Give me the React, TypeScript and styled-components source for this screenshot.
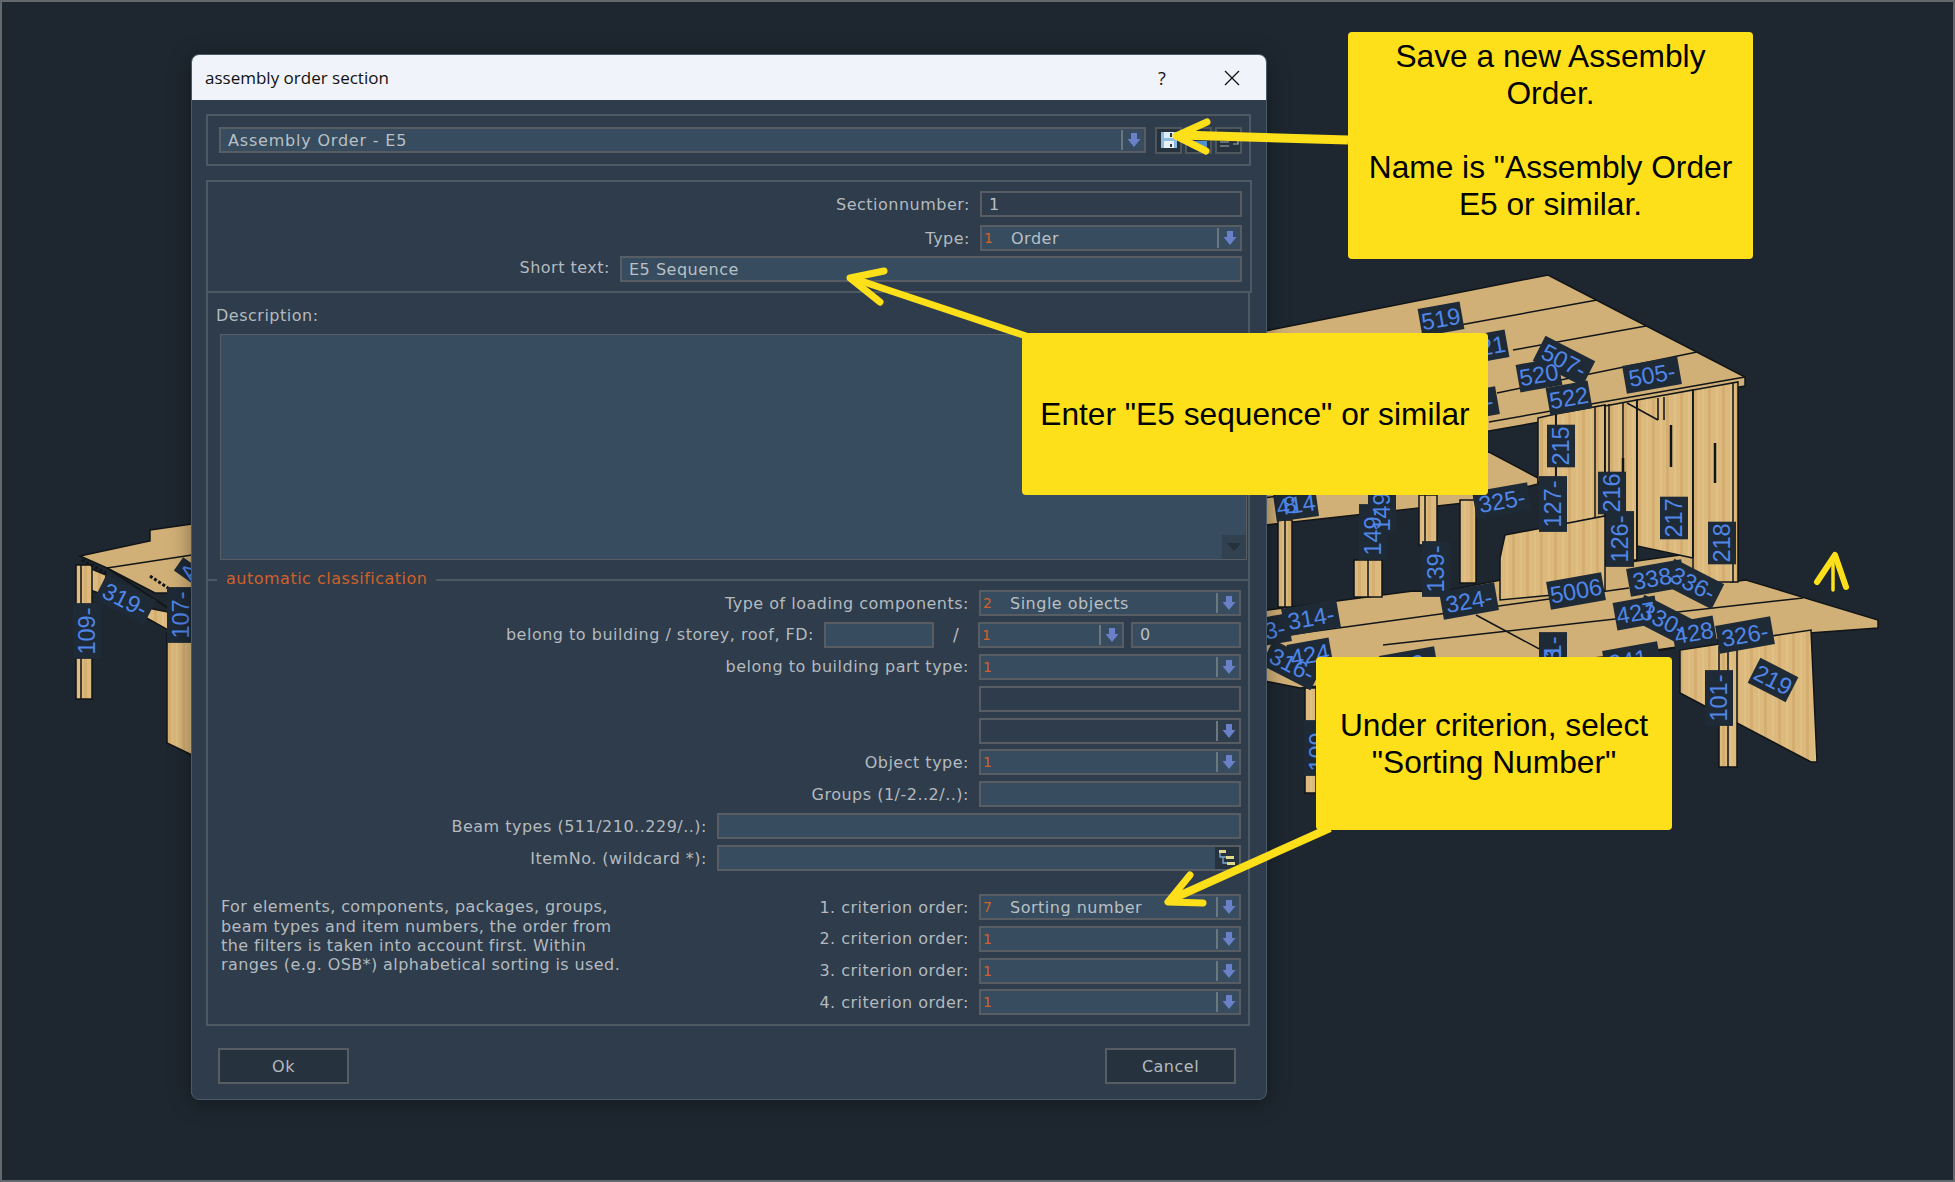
import * as React from 'react'
import styled, { createGlobalStyle } from 'styled-components'

const GlobalStyle = createGlobalStyle`
  html, body {
    margin: 0;
    padding: 0;
    background: #1e2730;
  }
`

const Desktop = styled.div`
  position: relative;
  width: 1955px;
  height: 1182px;
  overflow: hidden;
  background: #1e2730;
  box-shadow: inset 0 0 0 2px #63686c;
  font-family: "DejaVu Sans", sans-serif;
`

const SceneLayer = styled.svg`
  position: absolute;
  left: 0;
  top: 0;
`

const Dialog = styled.div`
  position: absolute;
  left: 191px;
  top: 54px;
  width: 1076px;
  height: 1046px;
  display: flex;
  flex-direction: column;
  box-sizing: border-box;
  border-radius: 8px;
  overflow: hidden;
  background: #2e3c4b;
  border: 1px solid #4b5a68;
  box-shadow: 0 3px 22px rgba(0, 0, 0, 0.4);
  color: #b4babf;
  font-size: 16px;
  letter-spacing: 0.5px;
`

const TitleBar = styled.div`
  height: 45px;
  flex: none;
  display: flex;
  align-items: center;
  background: #f0f3f9;
  color: #111;
  font-family: "Open Sans", sans-serif;
  font-size: 17px;
  letter-spacing: 0;
  padding: 0 26px 0 13px;
`

const TitleText = styled.div`
  flex: 1;
`

const HelpMark = styled.div`
  width: 20px;
  margin-right: 52px;
  text-align: center;
  font-size: 18px;
`

const DialogBody = styled.div`
  flex: 1;
  display: flex;
  flex-direction: column;
  padding: 14px 14px 0 14px;
`

const ProfileBar = styled.div`
  height: 52px;
  box-sizing: border-box;
  border: 2px solid #4e5964;
  display: flex;
  align-items: center;
  gap: 3px;
  padding: 0 9px 0 11px;
  margin-right: 1px;
`

const MainFrame = styled.div`
  margin-top: 14px;
  height: 113px;
  box-sizing: border-box;
  border: 2px solid #4e5964;
  display: grid;
  grid-template-rows: 34px 31px 26px;
  align-items: start;
  padding: 9px 8px 0 0;
`

const Row = styled.div`
  height: 26px;
  display: flex;
  align-items: center;
  justify-content: flex-end;
`

const Label = styled.span`
  white-space: nowrap;
  margin-right: 10px;
`

const RaisedLabel = styled(Label)`
  position: relative;
  top: -2px;
`

const Field = styled.div<{ $width: number; $dark?: boolean }>`
  width: ${p => p.$width}px;
  height: 26px;
  flex: none;
  box-sizing: border-box;
  border: 2px solid #575d63;
  background: ${p => (p.$dark ? '#2e3c4b' : '#374c5e')};
  display: flex;
  align-items: center;
  padding-left: 7px;
  color: #b9c0c5;
`

const ComboCode = styled.span`
  width: 27px;
  margin-left: -5px;
  flex: none;
  color: #cf622a;
  font-size: 14px;
`

const ComboText = styled.span<{ $wide?: boolean }>`
  flex: 1;
  white-space: nowrap;
  letter-spacing: ${p => (p.$wide ? 0.8 : 0.5)}px;
`

const ComboArrow = styled.div`
  width: 23px;
  height: 20px;
  flex: none;
  display: flex;
  align-items: center;
  justify-content: center;
  border-left: 2px solid #6c7780;
  box-sizing: border-box;
`

const ToolButton = styled.div`
  width: 27px;
  height: 27px;
  box-sizing: border-box;
  border: 2px solid #4f565c;
  background: #26323d;
  flex: none;
  display: flex;
  align-items: center;
  justify-content: center;
`

const TreeButton = styled(ToolButton)`
  width: 24px;
  height: 22px;
  border: none;
`

const Spacer = styled.span<{ $w: number }>`
  width: ${p => p.$w}px;
  flex: none;
`

const DescriptionBlock = styled.div`
  height: 286px;
  flex: none;
  box-sizing: border-box;
  border-right: 2px solid #4e5964;
  border-left: 2px solid #4e5964;
  margin-right: 2px;
  display: flex;
  flex-direction: column;
  padding: 13px 0 0 8px;
`

const DescriptionBox = styled.div`
  position: relative;
  margin-top: 9px;
  margin-left: 4px;
  margin-right: 1px;
  height: 226px;
  box-sizing: border-box;
  border: 1px solid #575d63;
  background: #374c5e;
`

const ScrollDown = styled.div`
  position: absolute;
  right: 0;
  bottom: 0;
  width: 24px;
  height: 24px;
  background: #31414f;
  display: flex;
  align-items: center;
  justify-content: center;
`

const ClassificationFrame = styled.div`
  position: relative;
  height: 447px;
  flex: none;
  box-sizing: border-box;
  border: 2px solid #4e5964;
  margin-right: 2px;
  padding: 9px 7px 0 0;
  display: flex;
  flex-direction: column;
`

const Legend = styled.span`
  position: absolute;
  left: 9px;
  top: -12px;
  padding: 0 8px 0 9px;
  background: #2e3c4b;
  color: #cf622a;
`

const ClassRows = styled.div`
  display: grid;
  grid-auto-rows: 26px;
  row-gap: 5.9px;
`

const Slash = styled.span`
  width: 44px;
  text-align: center;
  font-size: 17px;
`

const CriteriaArea = styled.div`
  margin-top: 23px;
  display: flex;
  justify-content: space-between;
`

const HelpNote = styled.div`
  margin-left: 13px;
  margin-top: 3px;
  line-height: 19.4px;
  white-space: pre-line;
  letter-spacing: 0.4px;
`

const CriteriaRows = styled.div`
  display: grid;
  grid-auto-rows: 26px;
  row-gap: 5.7px;
`

const ButtonRow = styled.div`
  display: flex;
  justify-content: space-between;
  padding: 22px 16px 0 12px;
`

const ActionButton = styled.div`
  width: 131px;
  height: 36px;
  box-sizing: border-box;
  border: 2px solid #575d63;
  background: #26323d;
  display: flex;
  align-items: center;
  justify-content: center;
`

const Callout = styled.div<{ $x: number; $y: number; $w: number; $h: number; $center?: boolean }>`
  position: absolute;
  left: ${p => p.$x}px;
  top: ${p => p.$y}px;
  width: ${p => p.$w}px;
  height: ${p => p.$h}px;
  box-sizing: border-box;
  background: #fde01a;
  border-radius: 4px;
  color: #000;
  font-family: "Liberation Sans", Arial, sans-serif;
  font-size: 31.7px;
  text-align: center;
  white-space: pre-line;
  display: flex;
  justify-content: center;
  align-items: ${p => (p.$center ? 'center' : 'flex-start')};
  padding-top: ${p => (p.$center ? 0 : 6)}px;
`

const ArrowLayer = styled.svg`
  position: absolute;
  left: 0;
  top: 0;
  pointer-events: none;
`

const DownArrow = () => (
  <svg width="14" height="16" viewBox="0 0 14 16">
    <path d="M4 1h6v6h3.5L7 15 .5 7H4z" fill="#6a80c8" />
  </svg>
)

const Combo = ({ width, code, text, dark }: { width: number; code?: string; text?: string; dark?: boolean }) => (
  <Field $width={width} $dark={dark}>
    <ComboCode>{code}</ComboCode>
    <ComboText>{text}</ComboText>
    <ComboArrow><DownArrow /></ComboArrow>
  </Field>
)

type Tag = { x: number; y: number; r: number; t: string }

const tags: Tag[] = [
  { x: 1441, y: 319, r: -10, t: '519' },
  { x: 1486, y: 347, r: -10, t: '521' },
  { x: 1470, y: 405, r: -10, t: '510-' },
  { x: 1539, y: 375, r: -10, t: '520' },
  { x: 1564, y: 361, r: 27, t: '507-' },
  { x: 1652, y: 375, r: -10, t: '505-' },
  { x: 1569, y: 398, r: -10, t: '522' },
  { x: 1561, y: 446, r: -90, t: '215' },
  { x: 1612, y: 493, r: -90, t: '216' },
  { x: 1674, y: 518, r: -90, t: '217' },
  { x: 1722, y: 543, r: -90, t: '218' },
  { x: 1553, y: 504, r: -90, t: '127-' },
  { x: 1620, y: 539, r: -90, t: '126-' },
  { x: 1502, y: 501, r: -10, t: '325-' },
  { x: 1296, y: 505, r: -8, t: '414' },
  { x: 1290, y: 505, r: -8, t: '8' },
  { x: 1373, y: 532, r: -90, t: '149-' },
  { x: 1382, y: 512, r: -90, t: '149' },
  { x: 1436, y: 569, r: -90, t: '139-' },
  { x: 1469, y: 601, r: -10, t: '324-' },
  { x: 1576, y: 591, r: -10, t: '5006' },
  { x: 1656, y: 578, r: -10, t: '338-' },
  { x: 1693, y: 584, r: 27, t: '336-' },
  { x: 1311, y: 618, r: -10, t: '314-' },
  { x: 1553, y: 660, r: -90, t: '131-' },
  { x: 1553, y: 668, r: -90, t: '213' },
  { x: 1636, y: 613, r: -10, t: '427' },
  { x: 1663, y: 620, r: 27, t: '330-' },
  { x: 1694, y: 633, r: -10, t: '428' },
  { x: 1745, y: 635, r: -10, t: '326-' },
  { x: 1262, y: 632, r: -10, t: '323-' },
  { x: 1310, y: 655, r: -10, t: '424' },
  { x: 1292, y: 665, r: 27, t: '316-' },
  { x: 1409, y: 665, r: -10, t: '233-' },
  { x: 1632, y: 660, r: -10, t: '341-' },
  { x: 1773, y: 680, r: 27, t: '219' },
  { x: 1719, y: 698, r: -90, t: '101-' },
  { x: 1318, y: 748, r: -90, t: '109-' },
  { x: 87, y: 631, r: -90, t: '109-' },
  { x: 125, y: 600, r: 27, t: '319-' },
  { x: 181, y: 615, r: -90, t: '107-' },
  { x: 190, y: 572, r: -55, t: 'A' },
]

const ink = '#111518'

// wooden parts of the model, all hand placed on the picture
const flatParts: string[] = [
  '80,556 150,541 150,530 192,524 192,593 155,593 107,568',
  '1260,332 1548,275 1745,377 1745,386 1489,431 1260,470',
  '1260,490 1489,452 1538,478 1538,484 1464,503 1266,525 1260,526',
  '1260,611 1413,591 1440,592 1501,580 1680,555 1689,555 1731,582 1746,580 1878,620 1878,628 1715,640 1652,652 1300,688 1260,680',
]

const grainParts: string[] = [
  '82,565 106,575 104,595 82,587',
  '143,607 168,612 168,630 143,616',
  '76,565 92,565 92,607 76,607',
  '76,656 92,656 92,699 76,699',
  '167,633 192,633 192,755 167,743',
  '1538,418 1556,414 1556,482 1538,482',
  '1556,414 1605,405 1605,516 1556,526',
  '1605,406 1637,400 1637,560 1605,560',
  '1637,400 1693,390 1693,558 1637,546',
  '1693,390 1738,382 1738,582 1693,582',
  '1278,520 1292,520 1292,607 1278,607',
  '1354,560 1382,560 1382,597 1354,597',
  '1419,495 1437,495 1437,545 1419,545',
  '1460,500 1476,500 1476,583 1460,583',
  '1505,535 1605,516 1605,590 1500,600 1500,558',
  '1680,650 1811,630 1817,762 1811,762 1680,693',
  '1719,647 1737,647 1737,767 1719,767',
  '1305,688 1316,688 1316,793 1305,793',
]

const seams: number[][] = [
  [1460, 325, 1597, 300],
  [1513, 350, 1646, 326],
  [1497, 393, 1697, 352],
  [1489, 422, 1745, 377],
  [1556, 414, 1556, 526],
  [1595, 407, 1595, 518],
  [1605, 405, 1605, 516],
  [1609, 404, 1609, 560],
  [1623, 402, 1623, 500],
  [1637, 400, 1637, 560],
  [1693, 390, 1693, 558],
  [1733, 382, 1733, 582],
  [1627, 403, 1658, 420],
  [1658, 398, 1658, 420],
  [1664, 397, 1664, 420],
  [1260, 498, 1464, 480],
  [1280, 636, 1629, 588],
  [1383, 645, 1803, 598],
  [1656, 650, 1742, 638],
  [1476, 615, 1545, 652],
  [1728, 650, 1728, 767],
  [1285, 520, 1285, 607],
  [1368, 560, 1368, 597],
  [1425, 495, 1425, 545],
  [81, 565, 81, 607],
  [81, 656, 81, 699],
  [107, 568, 168, 608],
  [107, 568, 192, 555],
]

const cracks: number[][] = [
  [1566, 433, 1566, 446],
  [1623, 458, 1623, 473],
  [1671, 425, 1671, 467],
  [1715, 443, 1715, 483],
]

const Scene = () => (
  <SceneLayer width="1955" height="1182" viewBox="0 0 1955 1182">
    <defs>
      <pattern id="grain" width="14" height="40" patternUnits="userSpaceOnUse">
        <rect width="14" height="40" fill="#dcb97c" />
        <rect width="3" height="40" fill="#d4ae70" />
        <rect x="8" width="2" height="40" fill="#e0c084" />
      </pattern>
    </defs>
    {flatParts.map((p, i) => (
      <polygon key={i} points={p} fill="#d1b077" stroke={ink} strokeWidth="1.5" />
    ))}
    {grainParts.map((p, i) => (
      <polygon key={i} points={p} fill="url(#grain)" stroke={ink} strokeWidth="1.5" />
    ))}
    {seams.map((s, i) => (
      <line key={i} x1={s[0]} y1={s[1]} x2={s[2]} y2={s[3]} stroke={ink} strokeWidth="1.5" />
    ))}
    {cracks.map((s, i) => (
      <line key={i} x1={s[0]} y1={s[1]} x2={s[2]} y2={s[3]} stroke={ink} strokeWidth="2.5" />
    ))}
    <path d="M82 560L106 573M150 576L168 588" stroke={ink} strokeWidth="3" strokeDasharray="3 2" />
    {tags.map((tag, i) => {
      const w = tag.t.length * 13.2 + 3
      return (
        <g key={i} transform={`translate(${tag.x} ${tag.y}) rotate(${tag.r})`}>
          <rect x={-w / 2} y={-14} width={w} height={28} fill="#1e2a36" />
        </g>
      )
    })}
    {tags.map((tag, i) => (
      <text
        key={i}
        transform={`translate(${tag.x} ${tag.y}) rotate(${tag.r})`}
        textAnchor="middle"
        y="8"
        fontFamily="Liberation Sans, sans-serif"
        fontSize="23.5"
        fill="#4f86e8"
      >
        {tag.t}
      </text>
    ))}
    <g fill="none" stroke="#fde01a" strokeWidth="6" strokeLinecap="round" strokeLinejoin="round">
      <path d="M1817 582 L1835 555 L1846 587" />
      <path d="M1833 563 L1833 590" strokeWidth="3.5" />
    </g>
  </SceneLayer>
)

const Arrows = () => (
  <ArrowLayer width="1955" height="1182" viewBox="0 0 1955 1182">
    <g fill="none" stroke="#fde01a" strokeLinecap="round" strokeLinejoin="round">
      <path d="M1348 140 L1180 135" strokeWidth="9" strokeLinecap="butt" />
      <path d="M1207 122 L1176 136 L1206 151" strokeWidth="7" />
      <path d="M1026 336 L855 279" strokeWidth="7" strokeLinecap="butt" />
      <path d="M884 271 L850 278 L880 302" strokeWidth="7" />
      <path d="M1330 828 L1172 899" strokeWidth="8" strokeLinecap="butt" />
      <path d="M1190 875 L1168 902 L1203 903" strokeWidth="7" />
    </g>
  </ArrowLayer>
)

export default function App() {
  return (
    <Desktop>
      <GlobalStyle />
      <Scene />

      <Dialog>
        <TitleBar>
          <TitleText>assembly order section</TitleText>
          <HelpMark>?</HelpMark>
          <svg width="16" height="16" viewBox="0 0 16 16">
            <path d="M1 1l14 14M15 1L1 15" stroke="#111" strokeWidth="1.3" />
          </svg>
        </TitleBar>

        <DialogBody>
          <ProfileBar>
            <Field $width={927}>
              <ComboText $wide>Assembly Order - E5</ComboText>
              <ComboArrow><DownArrow /></ComboArrow>
            </Field>
            <Spacer $w={3} />
            <ToolButton>
              <svg width="18" height="18" viewBox="0 0 18 18">
                <path d="M1 1h16v16H1z" fill="#8dbbe4" />
                <path d="M4 1h10v6H4z" fill="#dcecf8" />
                <path d="M10 2h2v4h-2z" fill="#2b3a48" />
                <path d="M4 10h10v7H4z" fill="#e8f1f8" />
                <path d="M10 13h2v3h-2z" fill="#2b3a48" />
              </svg>
            </ToolButton>
            <ToolButton>
              <svg width="18" height="16" viewBox="0 0 18 16">
                <path d="M3 2h12v5H3z" fill="#6f7d88" />
                <path d="M3 9h14v6H3z" fill="#4f8fd0" />
              </svg>
            </ToolButton>
            <ToolButton>
              <svg width="20" height="16" viewBox="0 0 20 16">
                <path d="M1 6h9M1 10h9M1 14h9M11 8l4-2h4v6h-5M5 2h13" fill="none" stroke="#a9adb0" strokeWidth="1.2" />
              </svg>
            </ToolButton>
          </ProfileBar>

          <MainFrame>
            <Row>
              <Label>Sectionnumber:</Label>
              <Field $width={262} $dark>1</Field>
            </Row>
            <Row>
              <Label>Type:</Label>
              <Combo width={262} code="1" text="Order" />
            </Row>
            <Row>
              <RaisedLabel>Short text:</RaisedLabel>
              <Field $width={622}>E5 Sequence</Field>
            </Row>
          </MainFrame>

          <DescriptionBlock>
            <span>Description:</span>
            <DescriptionBox>
              <ScrollDown>
                <svg width="14" height="8" viewBox="0 0 14 8">
                  <path d="M0 0h14L7 8z" fill="#24303a" />
                </svg>
              </ScrollDown>
            </DescriptionBox>
          </DescriptionBlock>

          <ClassificationFrame>
            <Legend>automatic classification</Legend>
            <ClassRows>
              <Row>
                <Label>Type of loading components:</Label>
                <Combo width={262} code="2" text="Single objects" />
              </Row>
              <Row>
                <Label>belong to building / storey, roof, FD:</Label>
                <Field $width={110} />
                <Slash>/</Slash>
                <Combo width={146} code="1" />
                <Spacer $w={7} />
                <Field $width={110}>0</Field>
              </Row>
              <Row>
                <Label>belong to building part type:</Label>
                <Combo width={262} code="1" />
              </Row>
              <Row><Field $width={262} $dark /></Row>
              <Row><Combo width={262} dark /></Row>
              <Row>
                <Label>Object type:</Label>
                <Combo width={262} code="1" />
              </Row>
              <Row>
                <Label>Groups (1/-2..2/..):</Label>
                <Field $width={262} />
              </Row>
              <Row>
                <Label>Beam types (511/210..229/..):</Label>
                <Field $width={524} />
              </Row>
              <Row>
                <Label>ItemNo. (wildcard *):</Label>
                <Field $width={524}>
                  <ComboText />
                  <TreeButton>
                    <svg width="18" height="18" viewBox="0 0 18 18">
                      <path d="M2 2v6h6M5 8v6h4" fill="none" stroke="#7fa8cf" strokeWidth="1.3" />
                      <path d="M1 1h7v3H1zM8 7h8v3H8zM9 13h8v3H9z" fill="#e0d98c" />
                    </svg>
                  </TreeButton>
                </Field>
              </Row>
            </ClassRows>

            <CriteriaArea>
              <HelpNote>
                {'For elements, components, packages, groups,\nbeam types and item numbers, the order from\nthe filters is taken into account first. Within\nranges (e.g. OSB*) alphabetical sorting is used.'}
              </HelpNote>
              <CriteriaRows>
                <Row>
                  <Label>1. criterion order:</Label>
                  <Combo width={262} code="7" text="Sorting number" />
                </Row>
                <Row>
                  <Label>2. criterion order:</Label>
                  <Combo width={262} code="1" />
                </Row>
                <Row>
                  <Label>3. criterion order:</Label>
                  <Combo width={262} code="1" />
                </Row>
                <Row>
                  <Label>4. criterion order:</Label>
                  <Combo width={262} code="1" />
                </Row>
              </CriteriaRows>
            </CriteriaArea>
          </ClassificationFrame>

          <ButtonRow>
            <ActionButton>Ok</ActionButton>
            <ActionButton>Cancel</ActionButton>
          </ButtonRow>
        </DialogBody>
      </Dialog>

      <Callout $x={1348} $y={32} $w={405} $h={227}>
        {'Save a new Assembly\nOrder.\n\nName is "Assembly Order\nE5 or similar.'}
      </Callout>
      <Callout $x={1022} $y={333} $w={466} $h={162} $center>
        {'Enter "E5 sequence" or similar'}
      </Callout>
      <Callout $x={1316} $y={657} $w={356} $h={173} $center>
        {'Under criterion, select\n"Sorting Number"'}
      </Callout>

      <Arrows />
    </Desktop>
  )
}
